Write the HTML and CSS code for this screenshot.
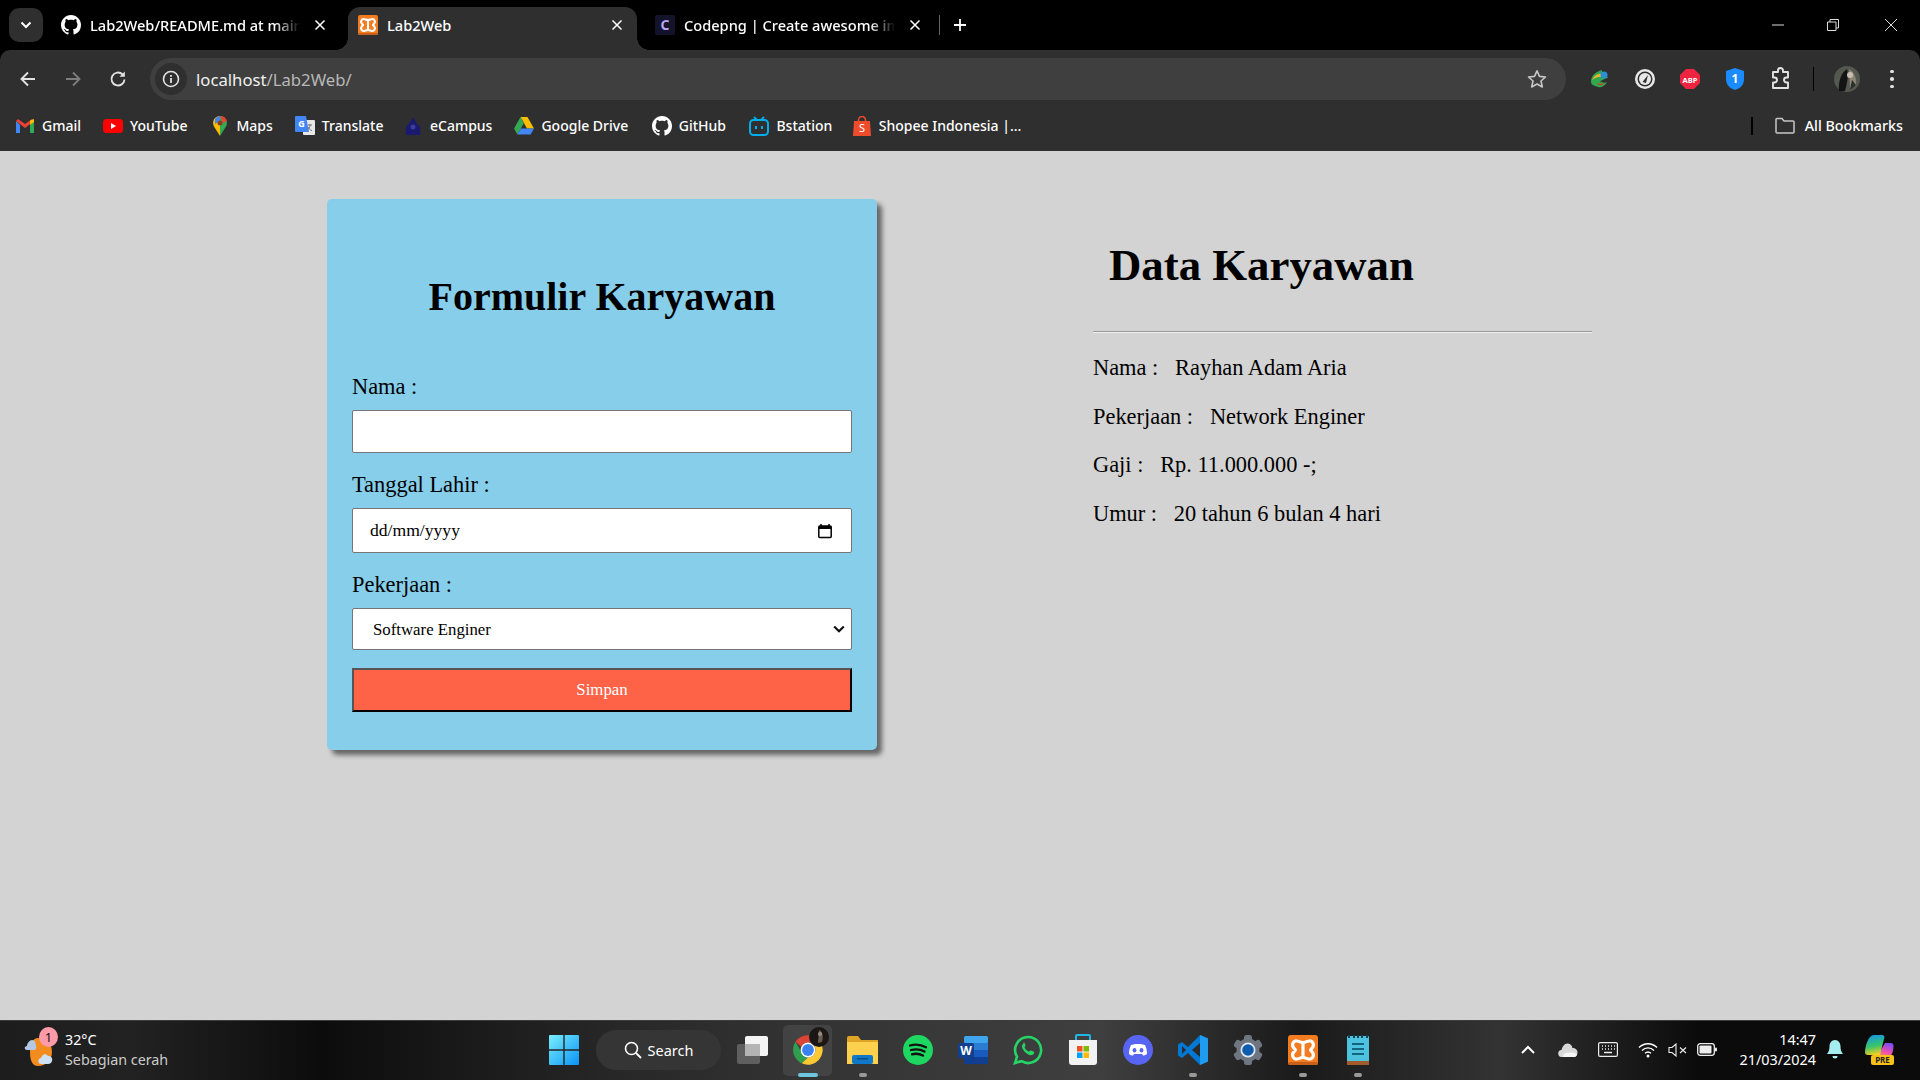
FILE: index.html
```html
<!DOCTYPE html>
<html lang="id">
<head>
<meta charset="utf-8">
<title>Lab2Web</title>
<link rel="stylesheet" href="styles.css">
</head>
<body>
<svg class="defs" width="0" height="0" aria-hidden="true">
  <symbol id="gh" viewBox="0 0 16 16"><path fill="#fff" d="M8 0C3.58 0 0 3.58 0 8c0 3.54 2.29 6.53 5.47 7.59.4.07.55-.17.55-.38 0-.19-.01-.82-.01-1.49-2.01.37-2.53-.49-2.69-.94-.09-.23-.48-.94-.82-1.13-.28-.15-.68-.52-.01-.53.63-.01 1.08.58 1.23.82.72 1.21 1.87.87 2.33.66.07-.52.28-.87.51-1.07-1.78-.2-3.64-.89-3.64-3.95 0-.87.31-1.59.82-2.15-.08-.2-.36-1.02.08-2.12 0 0 .67-.21 2.2.82.64-.18 1.32-.27 2-.27s1.36.09 2 .27c1.53-1.04 2.2-.82 2.2-.82.44 1.1.16 1.92.08 2.12.51.56.82 1.27.82 2.15 0 3.07-1.87 3.75-3.65 3.95.29.25.54.73.54 1.48 0 1.07-.01 1.93-.01 2.2 0 .21.15.46.55.38A8.013 8.013 0 0016 8c0-4.42-3.58-8-8-8z"/></symbol>
  <symbol id="xampp" viewBox="0 0 30 30"><rect width="30" height="30" rx="3" fill="#f37b20"/><rect y="27" width="30" height="3" rx="1.5" fill="#c9601a"/><path fill="none" stroke="#fff" stroke-width="3.200" stroke-linejoin="round" d="M9 6c2 0 3 1.500 6 1.500S19 6 21 6a4 4 0 0 1 3.500 6.500L22.500 15l2 2.500A4 4 0 0 1 21 24c-2 0-3-1.500-6-1.500S11 24 9 24a4 4 0 0 1-3.500-6.500L7.500 15l-2-2.500A4 4 0 0 1 9 6z"/><path stroke="#fff" stroke-width="3.200" d="M15 8v14"/></symbol>
</svg>

<header class="tabstrip">
  <div class="tab-search"><svg width="12" height="8" viewBox="0 0 12 8"><path d="M1.500 1.500 6 6l4.500-4.500" fill="none" stroke="#fff" stroke-width="2"/></svg></div>
  <div class="tab tab-one">
    <svg class="favicon"><use href="#gh"/></svg>
    <span class="tab-title fade">Lab2Web/README.md at main</span>
    <svg class="tab-close" viewBox="0 0 20 20"><path d="M5.500 5.500l9 9m0-9l-9 9" stroke="#fff" stroke-width="1.500"/></svg>
  </div>
  <div class="tab tab-two">
    <svg class="favicon"><use href="#xampp"/></svg>
    <span class="tab-title">Lab2Web</span>
    <svg class="tab-close" viewBox="0 0 20 20"><path d="M5.500 5.500l9 9m0-9l-9 9" stroke="#fff" stroke-width="1.500"/></svg>
  </div>
  <div class="tab tab-three">
    <svg class="favicon" viewBox="0 0 20 20"><rect width="20" height="20" rx="2" fill="#13132b"/><text x="10" y="15" text-anchor="middle" class="fav-c">C</text></svg>
    <span class="tab-title fade">Codepng | Create awesome im</span>
    <svg class="tab-close" viewBox="0 0 20 20"><path d="M5.500 5.500l9 9m0-9l-9 9" stroke="#fff" stroke-width="1.500"/></svg>
  </div>
  <span class="tab-sep"></span>
  <svg class="new-tab" viewBox="0 0 16 16"><path d="M8 2v12M2 8h12" stroke="#fff" stroke-width="1.800"/></svg>
  <div class="win-controls">
    <span class="win-btn win-min"><svg width="14" height="14" viewBox="0 0 14 14"><path d="M1 7h12" stroke="#ddd" stroke-width="1"/></svg></span>
    <span class="win-btn"><svg width="14" height="14" viewBox="0 0 14 14"><path d="M1.500 4h8.500v8.500H1.500zM4 4V1.500h8.500V10H10" fill="none" stroke="#ddd" stroke-width="1"/></svg></span>
    <span class="win-btn"><svg width="14" height="14" viewBox="0 0 14 14"><path d="M1 1l12 12M13 1L1 13" stroke="#ddd" stroke-width="1"/></svg></span>
  </div>
</header>

<div class="browser-bars">
  <div class="toolbar">
    <span class="nav-btn"><svg width="18" height="18" viewBox="0 0 18 18"><path d="M16 9H3m6-6.500L2.500 9 9 15.500" fill="none" stroke="#e3e3e3" stroke-width="1.900"/></svg></span>
    <span class="nav-btn"><svg width="18" height="18" viewBox="0 0 18 18"><path d="M2 9h13M9 2.500 15.500 9 9 15.500" fill="none" stroke="#7c7c7c" stroke-width="1.900"/></svg></span>
    <span class="nav-btn"><svg width="18" height="18" viewBox="0 0 18 18"><path d="M15.500 9.500A6.500 6.500 0 1 1 13.500 4.300" fill="none" stroke="#e3e3e3" stroke-width="1.900"/><path d="M15.800 1.500v5.300h-5.300z" fill="#e3e3e3"/></svg></span>
    <div class="omnibox">
      <span class="site-info"><svg width="18" height="18" viewBox="0 0 18 18"><circle cx="9" cy="9" r="7.500" fill="none" stroke="#e3e3e3" stroke-width="1.600"/><path d="M9 8v5M9 5v1.700" stroke="#e3e3e3" stroke-width="1.800"/></svg></span>
      <span class="url"><span class="url-host">localhost</span>/Lab2Web/</span>
      <svg class="star" width="22" height="22" viewBox="0 0 22 22"><path d="M11 2.800l2.500 5.600 6 .6-4.500 4 1.300 6L11 16l-5.300 3 1.300-6-4.500-4 6-.6z" fill="none" stroke="#c7c7c7" stroke-width="1.600" stroke-linejoin="round"/></svg>
    </div>
    <div class="extensions">
      <span class="ext"><svg width="22" height="22" viewBox="0 0 22 22"><path d="M2 14c0-6 4-10 11-12-1 3 5 5 6 8-4 0-5 3-8 3 2 2 5 2 7 1-2 4-6 6-9 5-3-1-7-2-7-5z" fill="#2fa84f"/><path d="M3 12c2-4 6-7 11-6l-1 3c-3-1-7 1-10 3z" fill="#f0b429"/><path d="M8 15c2 1 5 1 8 0l-3 2c-2 .5-4 0-5-2z" fill="#d8352a"/><circle cx="15" cy="7" r="3.500" fill="#2b8fd8"/></svg></span>
      <span class="ext"><svg width="22" height="24" viewBox="0 0 22 24"><circle cx="11" cy="12" r="10" fill="#e8e8e8"/><circle cx="11" cy="12" r="7.500" fill="#2f2f2f"/><circle cx="11" cy="12" r="6" fill="#e8e8e8"/><path d="M8.500 15 14 8l-2 8z" fill="#2f2f2f"/></svg></span>
      <span class="ext"><svg width="22" height="22" viewBox="0 0 22 22"><path d="M7 1h8l6 6v8l-6 6H7l-6-6V7z" fill="#ee2440"/><text x="11" y="14.500" text-anchor="middle" class="abp">ABP</text></svg></span>
      <span class="ext"><svg width="20" height="24" viewBox="0 0 20 24"><path d="M10 1l9 3v8c0 6-4 9.500-9 11C5 21.500 1 18 1 12V4z" fill="#1a8cff"/><text x="10" y="16" text-anchor="middle" class="shield-n">1</text></svg></span>
      <span class="ext ext-puzzle"><svg width="22" height="24" viewBox="0 0 22 24"><path d="M3 5h5V3.500a2.500 2.500 0 0 1 5 0V5h5v5.500h-1.500a2.500 2.500 0 0 0 0 5H18V21H3v-5.500h1.500a2.500 2.500 0 0 0 0-5H3z" fill="none" stroke="#e3e3e3" stroke-width="1.900" stroke-linejoin="round"/></svg></span>
    </div>
    <span class="bar-divider"></span>
    <span class="avatar"><svg width="26" height="26" viewBox="0 0 26 26"><circle cx="13" cy="13" r="13" fill="#55584f"/><path d="M5 25c-1-9 2-18 8-22 2 6 0 14-2 22z" fill="#141414"/><path d="M15 3c4 2 8 8 7 16l-6 4z" fill="#8a8576"/><circle cx="16" cy="9" r="3" fill="#c9bfae"/><path d="M18 14l4 5-6 5z" fill="#26302a"/></svg></span>
    <span class="menu-dots"><i></i><i></i><i></i></span>
  </div>
  <nav class="bookmarks">
    <a class="bm"><svg class="bm-icon" viewBox="0 0 20 16"><path d="M1 3v12h4V7z" fill="#4285f4"/><path d="M15 7v8h4V3z" fill="#34a853"/><path d="M1 3l9 7 9-7-2-2-7 5-7-5z" fill="#ea4335"/><path d="M15 2.500 19 1v3l-4 3z" fill="#fbbc04"/></svg>Gmail</a>
    <a class="bm"><svg class="bm-icon" viewBox="0 0 20 14"><rect width="20" height="14" rx="3.500" fill="#f00"/><path d="M8 4l5 3-5 3z" fill="#fff"/></svg>YouTube</a>
    <a class="bm"><svg class="bm-icon" viewBox="0 0 14 20"><path d="M7 0a7 7 0 0 0-6 10.500L7 20z" fill="#fbbc04"/><path d="M2 3A7 7 0 0 1 7 0l3 3-8 5z" fill="#4285f4"/><path d="M7 0a7 7 0 0 1 6 10.500L7 20z" fill="#34a853"/><path d="M7 0a7 7 0 0 1 6.800 5L10 7z" fill="#ea4335"/><circle cx="7" cy="7" r="2.500" fill="#8a3d1f"/></svg>Maps</a>
    <a class="bm bm-shrink"><svg class="bm-icon" viewBox="0 0 20 20"><rect x="8" y="4" width="12" height="15" rx="1" fill="#e8e8e8"/><path d="M1 0h10l3 16H1a1 1 0 0 1-1-1V1a1 1 0 0 1 1-1z" fill="#4285f4"/><text x="6.500" y="10.500" text-anchor="middle" class="tr-g">G</text><path d="M13 9h4m-2-1v1c0 2-1 4-2.500 5M13 11c1 2 2 3 4 3.500" fill="none" stroke="#777" stroke-width="1"/></svg>Translate</a>
    <a class="bm"><svg class="bm-icon" viewBox="0 0 20 20"><path d="M10 1c1 2 3 5 4 7 3 1 4 5 3 11H3C2 13 3 9 6 8c1-2 3-5 4-7z" fill="#1a1a6e"/><circle cx="10" cy="11" r="2.500" fill="#3c3c9c"/></svg>eCampus</a>
    <a class="bm bm-grow"><svg class="bm-icon" viewBox="0 0 20 18"><path d="M6.500 0h7l6.500 11.500h-7z" fill="#fbbc04"/><path d="M6.500 0 0 11.500 3.400 17.500 10 6z" fill="#34a853"/><path d="M3.400 17.500h13.200L20 11.500H6.800z" fill="#4285f4"/></svg>Google Drive</a>
    <a class="bm bm-grow"><svg class="bm-icon"><use href="#gh"/></svg>GitHub</a>
    <a class="bm bm-shrink"><svg class="bm-icon" viewBox="0 0 20 20"><path d="M5 1l3 3m7-3-3 3" stroke="#00aeec" stroke-width="1.800"/><rect x="1" y="4" width="18" height="15" rx="3.500" fill="none" stroke="#00aeec" stroke-width="2"/><path d="M7 10v3m6-3v3" stroke="#00aeec" stroke-width="2"/></svg>Bstation</a>
    <a class="bm"><svg class="bm-icon" viewBox="0 0 18 20"><path d="M1 5h16l1 15H0z" fill="#ee4d2d"/><path d="M5.500 6.500V4a3.500 3.500 0 0 1 7 0v2.500" fill="none" stroke="#ee4d2d" stroke-width="1.500"/><text x="9" y="16" text-anchor="middle" class="sp-s">S</text></svg>Shopee Indonesia |...</a>
    <span class="bm-divider"></span>
    <a class="bm bm-all"><svg class="bm-icon" viewBox="0 0 20 18"><path d="M1 2.500a1 1 0 0 1 1-1h5l2 2.500h9a1 1 0 0 1 1 1v10a1 1 0 0 1-1 1H2a1 1 0 0 1-1-1z" fill="none" stroke="#c7c7c7" stroke-width="1.500"/></svg>All Bookmarks</a>
  </nav>
</div>

<main class="page">
  <form class="card">
    <h2 class="card-title">Formulir Karyawan</h2>
    <label class="field-label label-first" for="nama">Nama :</label>
    <input class="control control-name" id="nama" type="text">
    <label class="field-label" for="tgl">Tanggal Lahir :</label>
    <div class="control control-date">
      <input class="date-text" id="tgl" type="text" value="dd/mm/yyyy">
      <svg class="cal" width="16" height="16" viewBox="0 0 16 16"><path d="M4 1v2.500M12 1v2.500" stroke="#000" stroke-width="1.500"/><rect x="1.800" y="3" width="12.400" height="11.500" rx="1" fill="none" stroke="#000" stroke-width="1.500"/><rect x="1.800" y="3" width="12.400" height="3" fill="#000"/></svg>
    </div>
    <label class="field-label" for="job">Pekerjaan :</label>
    <select class="control control-select" id="job"><option>Software Enginer</option><option>Network Enginer</option></select>
    <button class="submit" type="button">Simpan</button>
  </form>
  <section class="data">
    <h2 class="data-title">Data Karyawan</h2>
    <hr class="rule">
    <p class="row">Nama : &nbsp; Rayhan Adam Aria</p>
    <p class="row">Pekerjaan : &nbsp; Network Enginer</p>
    <p class="row">Gaji : &nbsp; Rp. 11.000.000 -;</p>
    <p class="row">Umur : &nbsp; 20 tahun 6 bulan 4 hari</p>
  </section>
</main>

<footer class="taskbar">
  <div class="weather">
    <span class="weather-icon">
      <svg width="36" height="36" viewBox="0 0 36 36"><path d="M14 6a14 14 0 0 1 0 28c-6 0-8-6-8-14S9 6 14 6z" fill="#f28c1e"/><path d="M3 14c0-3 3-6 5-6 3 0 4 3 4 6 1 2 0 4-2 4H3c-3 0-3-4 0-4z" fill="#b4c8e4"/><path d="M17 26c1-4 5-5 7-2 3 0 5 2 4 5-.5 2-2 3-4 3h-7c-3 0-4-5 0-6z" fill="#cfe0f4"/></svg>
      <b class="weather-badge">1</b>
    </span>
    <div class="weather-text"><span class="temp">32°C</span><span class="cond">Sebagian cerah</span></div>
  </div>
  <div class="task-center">
    <span class="slot"><svg width="30" height="30" viewBox="0 0 30 30"><defs><linearGradient id="wg" x1="0" y1="0" x2="1" y2="1"><stop offset="0" stop-color="#7aeefd"/><stop offset="1" stop-color="#0a93f5"/></linearGradient></defs><path d="M0 1a1 1 0 0 1 1-1h13.300v14.300H0zM15.700 0H29a1 1 0 0 1 1 1v13.300H15.700zM0 15.700h14.300V30H1a1 1 0 0 1-1-1zM15.700 15.700H30V29a1 1 0 0 1-1 1H15.700z" fill="url(#wg)"/></svg></span>
    <div class="search"><svg width="18" height="18" viewBox="0 0 18 18"><circle cx="7.500" cy="7.500" r="6" fill="none" stroke="#fff" stroke-width="1.600"/><path d="M12 12l5 5" stroke="#fff" stroke-width="1.800"/></svg>Search</div>
    <span class="slot"><svg width="32" height="28" viewBox="0 0 32 28"><rect y="8" width="23" height="20" rx="2" fill="#5f5f5f"/><rect x="8" width="23" height="20" rx="2" fill="#f4f4f4"/><rect x="8" y="8" width="15" height="12" fill="#b4b4b4"/></svg></span>
    <span class="slot slot-active"><svg width="34" height="34" viewBox="0 0 46 46"><path d="M23 3a20 20 0 0 1 17.300 10H23a10 10 0 0 0-9 5.700L6 12A20 20 0 0 1 23 3z" fill="#db4437"/><path d="M6 12l9 15.500A10 10 0 0 0 23 33l-8.500 8A20 20 0 0 1 6 12z" fill="#2f9e4f"/><path d="M40.300 13A20 20 0 0 1 14.500 41L23 33a10 10 0 0 0 8.700-15 10 10 0 0 0-1-5z" fill="#fcc934"/><circle cx="23" cy="23" r="10" fill="#fff"/><circle cx="23" cy="23" r="8" fill="#3a82f2"/></svg><span class="chrome-profile"><svg width="20" height="20" viewBox="0 0 20 20"><circle cx="10" cy="10" r="10" fill="#1b1715"/><path d="M10 3c3 1 5 5 3 12l-4 1z" fill="#6b5c52"/><circle cx="11" cy="7" r="2" fill="#9a8f88"/></svg></span></span>
    <span class="slot slot-run"><svg width="31" height="28" viewBox="0 0 31 28"><path d="M0 2a2 2 0 0 1 2-2h9l3 4h17v4H0z" fill="#e0a526"/><path d="M0 6h31v22H0z" fill="#fdd04e"/><rect x="5" y="19" width="21" height="9" rx="2" fill="#0f78c9"/><rect x="10" y="22" width="11" height="1.500" fill="#0a4c85"/></svg></span>
    <span class="slot"><svg width="30" height="30" viewBox="0 0 30 30"><circle cx="15" cy="15" r="15" fill="#1ed760"/><path d="M7 10.500c5-1.500 11-1 16 1.800M8 15c4.500-1.200 9.500-.8 13.500 1.600M9 19.300c3.600-1 7.600-.6 11 1.300" fill="none" stroke="#111" stroke-width="2.300" stroke-linecap="round"/></svg></span>
    <span class="slot"><svg width="30" height="30" viewBox="0 0 30 30"><rect x="6" y="1" width="24" height="28" rx="2" fill="#2b7cd3"/><rect x="6" y="1" width="24" height="7" rx="2" fill="#41a5ee"/><rect x="6" y="15" width="24" height="7" fill="#185abd"/><rect x="6" y="22" width="24" height="7" fill="#103f91"/><rect y="8" width="16" height="15" rx="1.500" fill="#12408f"/><text x="8" y="20" text-anchor="middle" class="word-w">W</text></svg></span>
    <span class="slot"><svg width="30" height="30" viewBox="0 0 30 30"><path d="M15 2a13 13 0 0 0-11 19.700L2 28l6.500-1.800A13 13 0 1 0 15 2z" fill="none" stroke="#25d366" stroke-width="2.600"/><path d="M10.500 8.500c-1.500 1-2 3-1 5 1.500 3 4 5.500 7 6.500 2 .5 3.500 0 4.500-1.500.5-1 .3-1.500-.5-2l-2.300-1c-.7-.2-1 0-1.500.6-.4.500-.8.600-1.500.2-1.500-.8-2.700-2-3.500-3.500-.3-.6 0-1 .4-1.400.5-.5.500-1 .3-1.500l-1-2.200c-.3-.5-.8-.6-.9-.2z" fill="#25d366"/></svg></span>
    <span class="slot"><svg width="30" height="31" viewBox="0 0 30 31"><path d="M8 6V2a1 1 0 0 1 1-1h12a1 1 0 0 1 1 1v4" fill="none" stroke="#1eb7e8" stroke-width="2"/><path d="M1 6h28v22a3 3 0 0 1-3 3H4a3 3 0 0 1-3-3z" fill="#f2f2f2"/><rect x="9" y="12" width="5.500" height="5.500" fill="#f25022"/><rect x="15.500" y="12" width="5.500" height="5.500" fill="#7fba00"/><rect x="9" y="18.500" width="5.500" height="5.500" fill="#00a4ef"/><rect x="15.500" y="18.500" width="5.500" height="5.500" fill="#ffb900"/></svg></span>
    <span class="slot"><svg width="30" height="30" viewBox="0 0 30 30"><circle cx="15" cy="15" r="15" fill="#5865f2"/><path d="M8 10c3-1.500 11-1.500 14 0 1.500 3 2 6 2 9-1.500 1-3 1.500-4 1.500l-1-1.500H11l-1 1.500c-1 0-2.500-.5-4-1.500 0-3 .5-6 2-9z" fill="#fff"/><ellipse cx="11.500" cy="15.200" rx="1.900" ry="2.200" fill="#5865f2"/><ellipse cx="18.500" cy="15.200" rx="1.900" ry="2.200" fill="#5865f2"/></svg></span>
    <span class="slot slot-run"><svg width="30" height="30" viewBox="0 0 30 30"><path d="M22 0l8 3.500v23L22 30 10 18l-6 5-4-2.500V9.500L4 7l6 5z" fill="#0078d4"/><path d="M22 0l8 3.500v23L22 30z" fill="#1f9cf0"/><path d="M22 8l-8 7 8 7z" fill="#2a2a2a"/><path d="M4 11v8l4-4z" fill="#2a2a2a"/></svg></span>
    <span class="slot"><svg width="30" height="30" viewBox="0 0 30 30"><g fill="#6d7681"><circle cx="15" cy="15" r="11.500"/><rect x="11" y="0" width="8" height="30" rx="2.500"/><rect x="11" y="0" width="8" height="30" rx="2.500" transform="rotate(60 15 15)"/><rect x="11" y="0" width="8" height="30" rx="2.500" transform="rotate(120 15 15)"/></g><circle cx="15" cy="15" r="7.500" fill="#e3e9ef"/><circle cx="15" cy="15" r="5.800" fill="#0f5cae"/></svg></span>
    <span class="slot slot-run"><svg width="30" height="30"><use href="#xampp"/></svg></span>
    <span class="slot slot-run"><svg width="22" height="30" viewBox="0 0 22 30"><rect y="1" width="22" height="29" rx="1" fill="#4ec3e0"/><rect y="26" width="22" height="4" fill="#a45a2a"/><path d="M2 0v3M7 0v3M11 0v3M15 0v3M20 0v3" stroke="#14404f" stroke-width="2"/><path d="M5 9h12M5 14h12M5 19h12" stroke="#14647e" stroke-width="2"/></svg></span>
  </div>
  <div class="tray">
    <span class="tray-item"><svg width="14" height="10" viewBox="0 0 14 10"><path d="M1 8l6-6 6 6" fill="none" stroke="#fff" stroke-width="2"/></svg></span>
    <span class="tray-item"><svg width="20" height="14" viewBox="0 0 20 14"><path d="M4 14a3.500 3.500 0 0 1-.5-7C4.500 3 7 0 10 .5c2.500.3 4 2 4.500 4.500 3 0 5 2 5 4.500 0 2.500-1.500 4.500-4 4.500z" fill="#d8d8d8"/><path d="M5 14c0-3 3-5 6-4 2-1 6 0 8 1 0 1-1 3-3 3z" fill="#f6f6f6"/></svg></span>
    <span class="tray-item"><svg width="20" height="15" viewBox="0 0 20 15"><rect x=".6" y=".6" width="18.800" height="13.800" rx="1.500" fill="none" stroke="#eee" stroke-width="1.200"/><path d="M4 4h1M7 4h1M10 4h1M13 4h1M16 4h1M4 7h1M7 7h1M10 7h1M13 7h1M16 7h1M6 10.500h8" stroke="#eee" stroke-width="1.300"/></svg></span>
    <span class="tray-item"><svg width="20" height="16" viewBox="0 0 20 16"><path d="M1 5.500c5-5 13-5 18 0M4 8.500c3.500-3.500 8.500-3.500 12 0M7 11.300c1.800-1.600 4.200-1.600 6 0" fill="none" stroke="#fff" stroke-width="1.400"/><circle cx="10" cy="14" r="1.500" fill="#fff"/></svg></span>
    <span class="tray-item tray-sound"><svg width="20" height="14" viewBox="0 0 20 14"><path d="M1 4.500h3L8 1v12L4 9.500H1z" fill="none" stroke="#eee" stroke-width="1.100"/><path d="M12 4.500l6 5.500m0-5.500l-6 5.500" stroke="#eee" stroke-width="1.100"/></svg></span>
    <span class="tray-item tray-battery"><svg width="20" height="13" viewBox="0 0 20 13"><rect x=".7" y=".7" width="16.600" height="11.600" rx="2.500" fill="none" stroke="#eee" stroke-width="1.300"/><rect x="2.500" y="2.500" width="12" height="8" rx="1" fill="#eee"/><rect x="18" y="4.500" width="2" height="4" rx="1" fill="#eee"/></svg></span>
    <div class="clock"><span>14:47</span><span>21/03/2024</span></div>
    <span class="tray-item tray-bell"><svg width="16" height="20" viewBox="0 0 16 20"><path d="M8 0c3.500 0 5.500 3 5.500 6.500 0 4 1 5.500 2.500 7.500H0c1.500-2 2.500-3.500 2.500-7.500C2.500 3 4.500 0 8 0z" fill="#a5eef0"/><path d="M5.500 16h5a2.500 2.500 0 0 1-5 0z" fill="#a5eef0"/></svg></span>
    <span class="tray-item tray-copilot"><svg width="30" height="30" viewBox="0 0 30 30"><defs><linearGradient id="cp1" x1="0.300" y1="0" x2="0.500" y2="1"><stop offset="0" stop-color="#1597e8"/><stop offset=".55" stop-color="#36c46c"/><stop offset="1" stop-color="#f7cf22"/></linearGradient><linearGradient id="cp2" x1="0.700" y1="0" x2="0.300" y2="1"><stop offset="0" stop-color="#7a4df5"/><stop offset=".6" stop-color="#ee4fb0"/><stop offset="1" stop-color="#f98a5a"/></linearGradient></defs><path d="M20 8h6c1.500 0 2.500 1 2.500 3 0 5-1.500 9-4 11H12z" fill="url(#cp2)"/><path d="M9 0h8c1 0 2 .5 2.500 2L15 20H3c-2 0-3-1-3-3C0 12 3 0 9 0z" fill="url(#cp1)"/><rect x="6" y="20" width="23" height="10" rx="2" fill="#f8c01b"/><text x="17.500" y="28" text-anchor="middle" class="pre">PRE</text></svg></span>
  </div>
</footer>
</body>
</html>
```

FILE: styles.css
```css
* { box-sizing: border-box; }
html, body { margin: 0; height: 100%; }
body {
  width: 1920px;
  height: 1080px;
  overflow: hidden;
  display: flex;
  flex-direction: column;
  background: #000;
  font-family: "Liberation Serif", "Times New Roman", serif;
  color: #000;
}
.defs { position: absolute; }

/* browser chrome */
.tabstrip {
  height: 50px;
  flex: none;
  display: flex;
  align-items: flex-start;
  padding-left: 9px;
  background: #000;
  font-family: "Noto Sans", sans-serif;
  color: #fff;
}
.tab-search {
  width: 34px;
  height: 34px;
  margin-top: 8px;
  border-radius: 10px;
  background: #2f2f2f;
  display: flex;
  align-items: center;
  justify-content: center;
}
.tab {
  position: relative;
  height: 43px;
  margin-top: 7px;
  padding-bottom: 8px;
  display: flex;
  align-items: center;
  border-radius: 12px 12px 0 0;
}
.tab-one { width: 298px; margin-left: 5px; padding-left: 13px; padding-right: 16px; }
.tab-two { width: 289px; margin-left: 2px; padding-left: 10px; padding-right: 10px; background: #2f2f2f; }
.tab-three { width: 295px; margin-left: 3px; padding-left: 15px; padding-right: 10px; }
.tab-two::before, .tab-two::after {
  content: "";
  position: absolute;
  bottom: 0;
  width: 12px;
  height: 12px;
}
.tab-two::before { left: -12px; background: radial-gradient(circle at 0 0, #000 11.500px, #2f2f2f 12px); }
.tab-two::after { right: -12px; background: radial-gradient(circle at 100% 0, #000 11.500px, #2f2f2f 12px); }
.favicon { width: 20px; height: 20px; flex: none; margin-right: 9px; }
.fav-c { font: 700 14px "Noto Sans", sans-serif; fill: #b7a5f0; }
.tab-title {
  flex: 1;
  min-width: 0;
  overflow: hidden;
  white-space: nowrap;
  font-size: 14.600px;
  font-weight: 500;
  line-height: 20px;
}
.fade {
  -webkit-mask-image: linear-gradient(90deg, #000 88%, transparent);
  mask-image: linear-gradient(90deg, #000 88%, transparent);
}
.tab-close { width: 20px; height: 20px; flex: none; margin-left: 10px; }
.tab-sep { width: 1px; height: 20px; margin: 15px 0 0 4px; background: #666; }
.new-tab { width: 16px; height: 16px; margin: 17px 0 0 12px; }
.win-controls { margin-left: auto; display: flex; height: 50px; }
.win-btn { width: 58px; display: flex; align-items: center; justify-content: center; }
.win-min { width: 52px; }

.browser-bars {
  flex: none;
  background: #2f2f2f;
  border-radius: 10px 10px 0 0;
  font-family: "Noto Sans", sans-serif;
  color: #fff;
}
.toolbar {
  height: 58px;
  padding: 0 13px 0 5px;
  display: flex;
  align-items: center;
}
.nav-btn { width: 45px; display: flex; align-items: center; justify-content: center; }
.omnibox {
  flex: 1;
  height: 42px;
  margin-left: 10px;
  padding: 0 18px 0 5px;
  display: flex;
  align-items: center;
  border-radius: 21px;
  background: #3f3f3f;
}
.site-info {
  width: 32px;
  height: 32px;
  border-radius: 50%;
  background: #2f2f2f;
  display: flex;
  align-items: center;
  justify-content: center;
}
.url { flex: 1; margin-left: 9px; font-size: 16.700px; color: #b8b8b8; }
.url-host { color: #f0f0f0; }
.extensions { display: flex; margin-left: 11px; }
.ext { width: 45px; display: flex; align-items: center; justify-content: center; }
.ext-puzzle { padding-left: 2px; }
.abp { font: 700 7.500px "Noto Sans", sans-serif; fill: #fff; }
.shield-n { font: 700 12px "Noto Sans", sans-serif; fill: #fff; }
.bar-divider { width: 1px; height: 24px; margin-left: 11px; background: #000; }
.avatar { width: 30px; margin-left: 18px; display: flex; align-items: center; justify-content: center; }
.menu-dots { width: 30px; margin-left: 15px; display: flex; flex-direction: column; align-items: center; gap: 4px; }
.menu-dots i { width: 3.500px; height: 3.500px; border-radius: 50%; background: #e3e3e3; }

.bookmarks {
  height: 43px;
  padding: 0 17px 8px 15px;
  display: flex;
  align-items: center;
}
.bm {
  display: flex;
  align-items: center;
  gap: 7px;
  margin-right: 22px;
  font-size: 14px;
  font-weight: 500;
  white-space: nowrap;
}
.bm-shrink { margin-right: 19.500px; }
.bm-grow { margin-right: 23.500px; }
.bm-icon { width: 20px; height: 20px; flex: none; }
.tr-g { font: 700 9px "Noto Sans", sans-serif; fill: #fff; }
.sp-s { font: 400 11px "Noto Sans", sans-serif; fill: #fff; }
.bm-divider { width: 2px; height: 18px; margin-left: auto; margin-right: 21.500px; background: #000; }
.bm-all { margin-right: 0; gap: 10px; font-size: 14.300px; }

/* page */
.page {
  flex: 1;
  min-height: 0;
  padding: 48px 0 0 327px;
  display: flex;
  align-items: flex-start;
  background: #d3d3d3;
}
.card {
  width: 550px;
  height: 551px;
  padding: 25px 25px 0;
  flex: none;
  border-radius: 5px;
  background: #87ceeb;
  box-shadow: 5px 5px 5px #666;
}
.card-title {
  margin: 50px 0 0;
  font-size: 40px;
  line-height: 46px;
  text-align: center;
}
.field-label {
  display: block;
  margin-top: 19px;
  font-size: 22.400px;
  line-height: 25px;
}
.label-first { margin-top: 54px; }
.control {
  display: block;
  width: 500px;
  margin-top: 11px;
  border: 1px solid #767676;
  border-radius: 2px;
  background: #fff;
  font-family: "Liberation Serif", "Times New Roman", serif;
}
.control-name { height: 43px; }
.control-date {
  height: 45px;
  padding: 0 18px 0 17px;
  display: flex;
  align-items: center;
}
.date-text {
  flex: 1;
  min-width: 0;
  padding: 0;
  border: 0;
  outline: 0;
  font-family: inherit;
  font-size: 17.600px;
  color: #000;
  background: transparent;
}
.control-select {
  height: 42px;
  padding-left: 20px;
  font-size: 16.800px;
  color: #000;
  appearance: none;
  -webkit-appearance: none;
  background: #fff url("data:image/svg+xml,%3Csvg xmlns='http://www.w3.org/2000/svg' width='12' height='8' viewBox='0 0 12 8'%3E%3Cpath d='M1.200 1.500 6 6.200l4.800-4.700' fill='none' stroke='%23111' stroke-width='2.200'/%3E%3C/svg%3E") no-repeat right 6px center;
}
.submit {
  display: block;
  width: 500px;
  height: 44px;
  margin-top: 18px;
  border: 2px outset #000;
  border-color: #555 #000 #000 #555;
  background: #ff6347;
  color: #fff;
  font-family: inherit;
  font-size: 16.800px;
}
.data { width: 499px; margin-left: 216px; flex: none; }
.data-title {
  margin: 41px 0 0;
  padding-left: 16px;
  font-size: 44.800px;
  line-height: 50px;
}
.rule {
  margin: 41px 0 0;
  height: 2px;
  border: 0;
  border-top: 1px solid #9a9a9a;
  border-bottom: 1px solid #eee;
}
.row {
  margin: 22px 0 22.600px;
  font-size: 22.400px;
  line-height: 26px;
}

/* taskbar */
.taskbar {
  height: 60px;
  flex: none;
  padding-bottom: 2px;
  display: flex;
  align-items: center;
  border-top: 1px solid #3c3c3c;
  background: linear-gradient(90deg, #1d1d1d 0, #222 130px, #0c0c0c 320px, #262626 600px, #333 800px, #3f3f3f 1100px, #1a1a1a 1300px, #333 1500px, #0b0b0b 1700px, #0b0b0b 100%);
  font-family: "Noto Sans", sans-serif;
  color: #fff;
}
.weather {
  width: 536px;
  flex: none;
  padding-left: 24px;
  display: flex;
  align-items: center;
}
.weather-icon { position: relative; width: 41px; height: 36px; flex: none; }
.weather-badge {
  position: absolute;
  left: 15px;
  top: -5px;
  width: 19px;
  height: 20px;
  border-radius: 50%;
  background: #ff9aa8;
  color: #111;
  font: 400 13px/20px "Noto Sans", sans-serif;
  text-align: center;
}
.weather-text { display: flex; flex-direction: column; font-size: 14.300px; line-height: 20px; }
.cond { color: #ccc; }
.task-center { display: flex; align-items: center; height: 100%; }
.slot {
  position: relative;
  width: 55px;
  height: 100%;
  flex: none;
  display: flex;
  align-items: center;
  justify-content: center;
}
.search {
  width: 125px;
  height: 40px;
  margin: 0 4px 0 5px;
  flex: none;
  border-radius: 20px;
  background: #353535;
  display: flex;
  align-items: center;
  justify-content: center;
  gap: 6px;
  font-size: 14.500px;
}
.slot-active::before {
  content: "";
  position: absolute;
  left: 3px;
  right: 3px;
  top: 4px;
  bottom: 2px;
  border-radius: 5px;
  background: rgba(255, 255, 255, .08);
}
.slot-active > svg { position: relative; }
.slot-active::after, .slot-run::after {
  content: "";
  position: absolute;
  bottom: 1px;
  left: 50%;
  height: 4px;
  border-radius: 2px;
}
.slot-active::after { width: 20px; margin-left: -10px; background: #6ec6dc; }
.slot-run::after { width: 8px; margin-left: -4px; background: #999; }
.chrome-profile { position: absolute; left: 29px; top: 6px; line-height: 0; }
.word-w { font: 700 12px "Noto Sans", sans-serif; fill: #fff; }
.tray {
  margin-left: auto;
  padding-right: 20px;
  height: 100%;
  display: flex;
  align-items: center;
}
.tray-item { width: 40px; display: flex; align-items: center; justify-content: center; }
.tray-sound { width: 20px; }
.tray-battery { width: 38px; }
.tray-bell { margin-left: -1px; }
.tray-copilot { margin-left: 5px; }
.clock {
  width: 90px;
  display: flex;
  flex-direction: column;
  align-items: flex-end;
  font-size: 14.400px;
  line-height: 20px;
}
.pre { font: 700 8px "Noto Sans", sans-serif; fill: #222; }
```
